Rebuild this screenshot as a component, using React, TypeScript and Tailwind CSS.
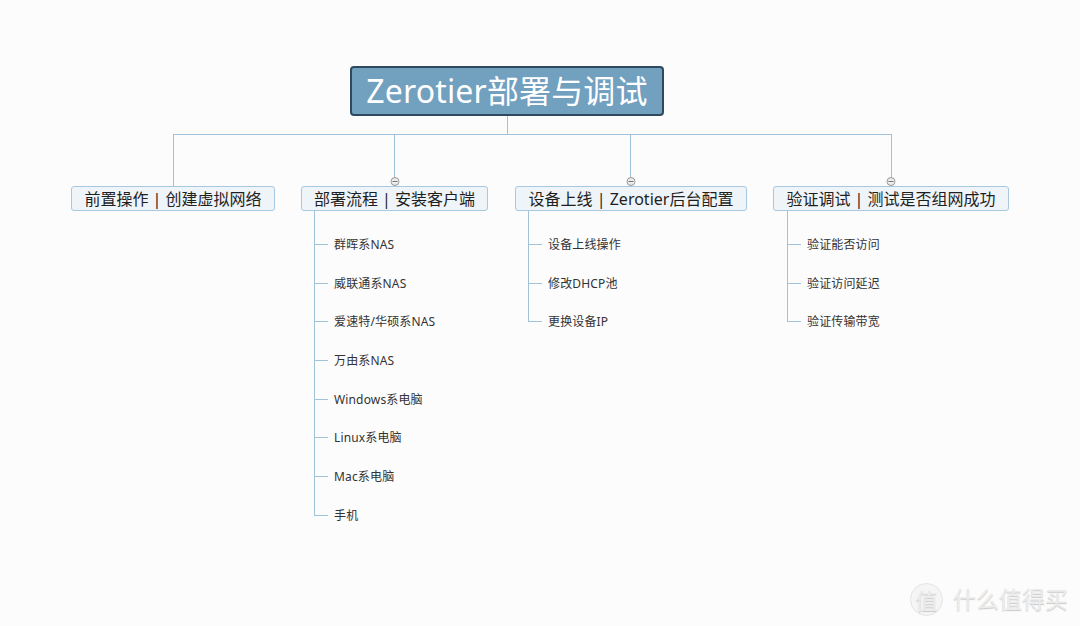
const font = { fontFamily: '"Noto Sans","Noto Sans CJK SC",sans-serif' };

function Minus() {
  return (
    <div className="absolute left-1/2 top-[42px] -translate-x-1/2 w-[9px] h-[9px] rounded-full border border-[#999] bg-[#ececec] flex items-center justify-center">
      <div className="w-[5px] h-px bg-[#777]" />
    </div>
  );
}

type Branch = { title: string; width: string; items: string[]; collapse: boolean; extra?: string; stem?: string; list?: string };

function Column({ title, width, items, collapse, extra, stem, list }: Branch) {
  return (
    <div className={`flex flex-col ${width} ${extra ?? ""}`}>
      <div className={`relative h-[51px] flex justify-center ${stem ?? ""}`}>
        <div className="w-px bg-[#a2c2d9]" />
        {collapse && <Minus />}
      </div>
      <div className="h-[25px] rounded-[3px] border border-[#a6c8e0] bg-[#eff4f8] flex items-center justify-center text-[16px] leading-none text-[#1f1f1f] whitespace-nowrap">
        {title}
      </div>
      {items.length > 0 && (
        <div className={`flex flex-col ${list ?? "ml-[13px]"}`}>
          <div className="h-[14px] w-px bg-[#a2c2d9]" />
          {items.map((t, i) => (
            <div key={t} className="relative h-[38.7px] flex items-center pl-[20px]">
              <div className={`absolute left-0 top-0 w-px bg-[#a2c2d9] ${i === items.length - 1 ? "h-[19px]" : "h-full"}`} />
              <div className="absolute left-0 top-[19px] w-[14px] h-px bg-[#a2c2d9]" />
              <span className="relative top-[0.5px] text-[12px] tracking-[0.15px] leading-none text-[#333] whitespace-nowrap">{t}</span>
            </div>
          ))}
        </div>
      )}
    </div>
  );
}

const branches: Branch[] = [
  { title: "前置操作 | 创建虚拟网络", width: "w-[204px]", items: [], collapse: false },
  {
    title: "部署流程 | 安装客户端",
    width: "w-[187px]",
    collapse: true,
    items: ["群晖系NAS", "威联通系NAS", "爱速特/华硕系NAS", "万由系NAS", "Windows系电脑", "Linux系电脑", "Mac系电脑", "手机"],
  },
  { title: "设备上线 | Zerotier后台配置", width: "w-[232px]", collapse: true, extra: "ml-px", stem: "pr-px", items: ["设备上线操作", "修改DHCP池", "更换设备IP"] },
  { title: "验证调试 | 测试是否组网成功", width: "w-[236px]", collapse: true, list: "ml-[14px]", items: ["验证能否访问", "验证访问延迟", "验证传输带宽"] },
];

export default function App() {
  return (
    <div className="relative w-[1080px] h-[626px] overflow-hidden bg-[#fcfcfd] pt-[66px] flex flex-col" style={font}>
      <div className="ml-[350px] w-[314px] h-[50px] rounded-[4px] border-2 border-[#2f4a5e] bg-[#72a0bf] flex items-center justify-center text-white text-[32px] tracking-[0.15px] leading-none whitespace-nowrap">
        Zerotier部署与调试
      </div>
      <div className="ml-[507px] w-px h-[18px] bg-[#a2c2d9]" />
      <div className="ml-[173px] w-[719px] h-px bg-[#a2c2d9]" />
      <div className="flex items-start gap-[26px] pl-[71px]">
        {branches.map((b) => (
          <Column key={b.title} {...b} />
        ))}
      </div>

      <div className="absolute left-[910px] top-[583px] flex items-center gap-[10px] text-[#ececec] [text-shadow:0_1px_1px_#c8c8c8]">
        <div className="w-[33px] h-[33px] rounded-full bg-[#f5f5f5] border border-[#e4e4e4] flex items-center justify-center text-[22px] leading-none">值</div>
        <span className="text-[23px] leading-none whitespace-nowrap">什么值得买</span>
      </div>
    </div>
  );
}
